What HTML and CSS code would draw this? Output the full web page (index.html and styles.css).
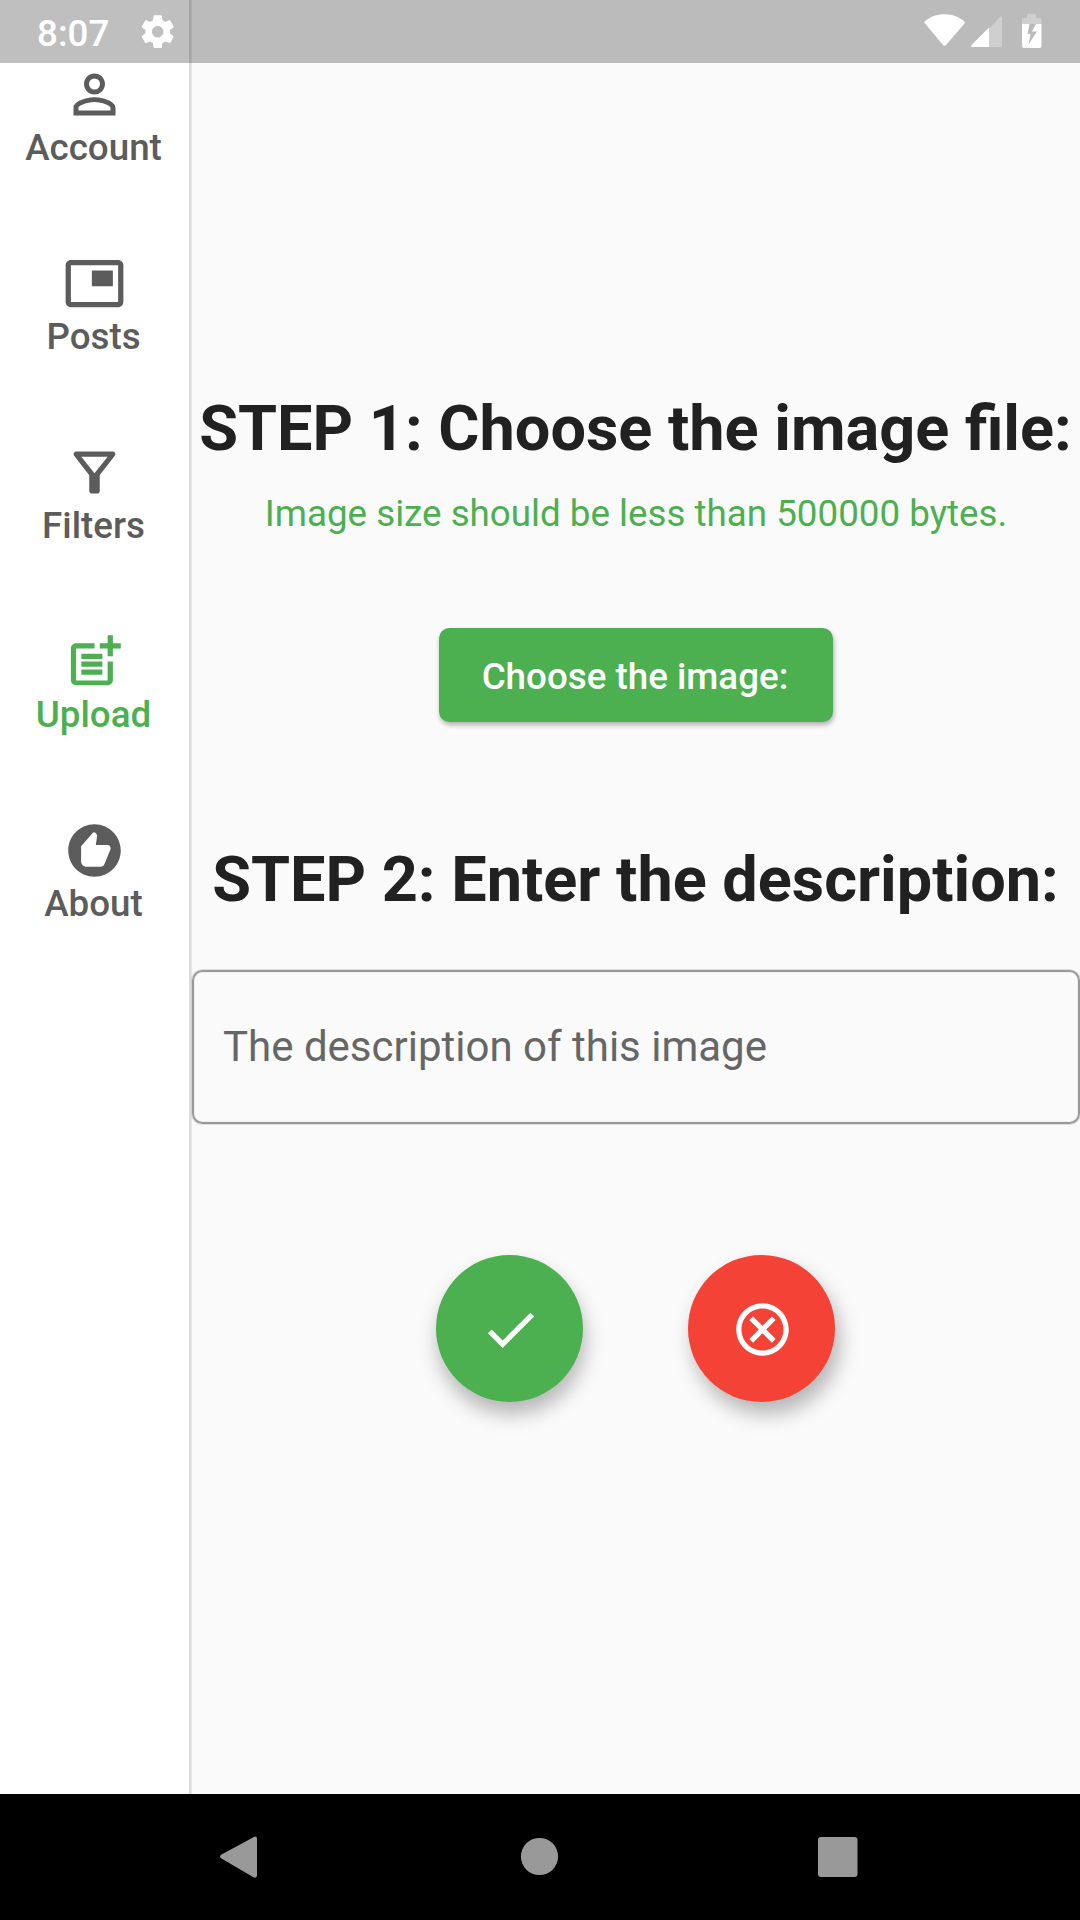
FILE: index.html
```html
<!DOCTYPE html>
<html lang="en">
<head>
<meta charset="utf-8">
<title>Upload</title>
<link rel="stylesheet" href="styles.css">
</head>
<body>
<div class="screen">
  <div class="app">
    <nav class="rail">
      <a class="rail-item">
        <svg class="icon" viewBox="0 0 24 24"><path d="M12 5.9a2.1 2.1 0 1 1 0 4.2 2.1 2.1 0 0 1 0-4.2m0 9c2.97 0 6.1 1.46 6.1 2.1v1.1H5.9V17c0-.64 3.13-2.1 6.1-2.1M12 4C9.79 4 8 5.79 8 8s1.79 4 4 4 4-1.79 4-4-1.79-4-4-4zm0 9c-2.67 0-8 1.34-8 4v3h16v-3c0-2.66-5.33-4-8-4z"/></svg>
        <span>Account</span>
      </a>
      <a class="rail-item">
        <svg class="icon" viewBox="0 0 24 24"><path d="M19 7h-8v6h8V7zm2-4H3c-1.1 0-2 .9-2 2v14c0 1.1.9 2 2 2h18c1.1 0 2-.9 2-2V5c0-1.1-.9-2-2-2zm0 16H3V5h18v14z"/></svg>
        <span>Posts</span>
      </a>
      <a class="rail-item">
        <svg class="icon" viewBox="0 0 24 24"><path d="M7 6h10l-5.01 6.3L7 6zm-2.75-.39C6.27 8.2 10 13 10 13v6c0 .55.45 1 1 1h2c.55 0 1-.45 1-1v-6s3.72-4.8 5.74-7.39A.998.998 0 0 0 18.95 4H5.04c-.83 0-1.3.95-.79 1.61z"/></svg>
        <span>Filters</span>
      </a>
      <a class="rail-item active">
        <svg class="icon" viewBox="0 0 24 24"><path d="M17 19.22H5V7h7V5H5c-1.1 0-2 .9-2 2v12c0 1.1.9 2 2 2h12c1.1 0 2-.9 2-2v-7h-2v7.22zM19 2h-2v3h-3v2h3v3h2V7h3V5h-3V2zM7 9h8v2H7zM7 12h8v2H7zM7 15h8v2H7z"/></svg>
        <span>Upload</span>
      </a>
      <a class="rail-item">
        <svg class="icon" viewBox="0 0 24 24"><path d="M12 2C6.48 2 2 6.48 2 12s4.48 10 10 10 10-4.48 10-10S17.52 2 12 2zm6.1 9.5-2.3 5.6c-.25.66-.75 1.05-1.4 1.05H9c-1.1 0-2.1-.9-2.1-2v-5.8L11.3 5.3c.3-.35.75-.35 1.1 0 .55.5.65.9.55 1.5L12.5 9.9h4.4c.9 0 1.4.7 1.2 1.6z"/></svg>
        <span>About</span>
      </a>
    </nav>
    <div class="divider"></div>
    <main class="content">
      <h1 class="step">STEP 1: Choose the image file:</h1>
      <p class="note">Image size should be less than 500000 bytes.</p>
      <button class="choose">Choose the image:</button>
      <h1 class="step second">STEP 2: Enter the description:</h1>
      <div class="field">The description of this image</div>
      <div class="actions">
        <button class="fab confirm"><svg class="icon" viewBox="0 0 24 24"><path d="M9 16.17L4.83 12l-1.42 1.41L9 19 21 7l-1.41-1.41z"/></svg></button>
        <button class="fab cancel"><svg class="icon" viewBox="0 0 24 24"><path d="M15.59 7 12 10.59 8.41 7 7 8.41 10.59 12 7 15.59 8.41 17 12 13.41 15.59 17 17 15.59 13.41 12 17 8.41zM12 2C6.47 2 2 6.47 2 12s4.47 10 10 10 10-4.47 10-10S17.53 2 12 2zm0 18c-4.41 0-8-3.59-8-8s3.59-8 8-8 8 3.59 8 8-3.59 8-8 8z"/></svg></button>
      </div>
    </main>
  </div>
  <footer class="navbar">
    <svg width="80" height="126"><path d="M52 43.500 20.500 60.500Q17.500 62.500 20.500 64.500L52 83Q56 85 56 81V45Q56 41 52 43.500Z"/></svg>
    <svg width="80" height="126"><circle cx="39.500" cy="62.500" r="18.600"/></svg>
    <svg width="80" height="126"><rect x="19" y="43" width="39.500" height="40" rx="3"/></svg>
  </footer>
  <header class="status">
    <span class="clock">8:07</span>
    <svg class="gear" viewBox="0 0 24 24"><path d="M19.43 12.98c.04-.32.07-.64.07-.98s-.03-.66-.07-.98l2.11-1.65c.19-.15.24-.42.12-.64l-2-3.46c-.12-.22-.39-.3-.61-.22l-2.49 1c-.52-.4-1.08-.73-1.69-.98l-.38-2.65C14.46 2.180 14.250 2 14 2h-4c-.25 0-.46.18-.49.42l-.38 2.65c-.61.25-1.17.59-1.69.98l-2.490-1c-.23-.09-.49 0-.61.22l-2 3.46c-.13.22-.07.49.12.64l2.11 1.65c-.04.32-.07.65-.07.98s.03.66.07.98l-2.110 1.650c-.19.15-.24.42-.12.64l2 3.460c.12.22.39.3.61.22l2.490-1c.52.4 1.080.73 1.690.98l.38 2.650c.03.24.24.42.49.42h4c.25 0 .46-.18.49-.42l.38-2.650c.61-.25 1.170-.59 1.690-.98l2.490 1c.23.09.49 0 .61-.22l2-3.460c.12-.22.07-.49-.12-.64l-2.110-1.650zM12 15.500c-1.930 0-3.500-1.570-3.500-3.500s1.570-3.500 3.500-3.500 3.500 1.570 3.500 3.500-1.570 3.500-3.500 3.500z"/></svg>
    <svg class="signals" width="120" height="63" viewBox="922 0 120 63">
      <path d="M924.500 21.500C935 11.700 954 11.700 964.500 21.500Q965 22.500 964.500 23.500L946 45Q944.500 46.500 943 45L925 23.500Q924 22.500 924.500 21.500Z"/>
      <path class="dim" d="M989 28.500 1000 17Q1002 15 1002 18V45Q1002 47 1000 47H989Z"/>
      <path d="M989 27.500V47H972.500Q970 46.500 972 44.500Z"/>
      <path class="dim" d="M1022 24V19.500Q1022 18 1023.500 18H1027V15.500Q1027 14 1028.500 14H1034.500Q1036 14 1036 15.500V18H1040Q1041.500 18 1041.500 19.500V24Z"/>
      <path fill-rule="evenodd" d="M1022 24H1041.500V46Q1041.500 48 1039.500 48H1024Q1022 48 1022 46ZM1029.500 24 1027.500 34H1030.500L1028.500 44.500 1037 31.500H1032L1036 24Z"/>
    </svg>
  </header>
</div>
</body>
</html>
```
FILE: styles.css
```css
* { box-sizing: border-box; }

body {
  margin: 0;
  font-family: Roboto, "Noto Sans", sans-serif;
}

.screen {
  position: relative;
  display: flex;
  flex-direction: column;
  width: 1080px;
  height: 1920px;
  overflow: hidden;
}

.app {
  display: flex;
  height: 1794px;
  background: #fafafa;
}

.rail {
  display: flex;
  flex-direction: column;
  width: 189px;
  padding-top: 63px;
  background: #fff;
}

.rail-item {
  display: flex;
  flex-direction: column;
  align-items: center;
  height: 189px;
  font-size: 36.75px;
  font-weight: 500;
  line-height: 43px;
  color: #5c5c5c;
}

.rail-item span { margin-right: 2px; }

.rail-item.active { color: #4caf50; }

.icon {
  width: 63px;
  height: 63px;
  fill: currentColor;
}

.divider {
  width: 3px;
  background: linear-gradient(to right, #dcdcdc 2px, #e6e6e6 2px);
}

.content {
  display: flex;
  flex: 1;
  flex-direction: column;
  align-items: center;
  padding-top: 392px;
}

.step {
  margin: 0 1px 0 0;
  font-size: 63px;
  font-weight: 700;
  line-height: 74px;
  white-space: nowrap;
  color: #212121;
}

.note {
  margin: 26px 0 0;
  font-size: 36.75px;
  line-height: 43px;
  color: #4caf50;
}

.choose {
  width: 394px;
  height: 94px;
  margin-top: 93px;
  padding: 2px 2px 0 0;
  border: 0;
  border-radius: 10.5px;
  background: #4caf50;
  box-shadow: 1px 3px 5px rgba(0, 0, 0, .3);
  font: 500 36.75px/43px Roboto, sans-serif;
  color: #fff;
}

.step.second { margin-top: 121px; }

.field {
  display: flex;
  align-items: center;
  align-self: stretch;
  height: 154px;
  margin-top: 53px;
  padding: 0 0 2px 29px;
  border: 2px solid #999;
  border-radius: 10.5px;
  box-shadow: 0 0 0 1px rgba(0, 0, 0, .1), inset 0 0 0 1px rgba(0, 0, 0, .04);
  font-size: 42px;
  line-height: 49px;
  color: #666;
}

.actions {
  display: flex;
  gap: 105px;
  margin: 131px 1px 0 0;
}

.fab {
  display: flex;
  align-items: center;
  justify-content: center;
  width: 147px;
  height: 147px;
  padding: 2px 0 0 1px;
  border: 0;
  border-radius: 50%;
  color: #fff;
}

.confirm {
  background: #4caf50;
  box-shadow: 2px 12px 20px rgba(0, 0, 0, .28);
}

.cancel {
  background: #f44336;
  box-shadow: 5px 12px 20px rgba(0, 0, 0, .28);
}

.navbar {
  display: flex;
  justify-content: center;
  gap: 219px;
  height: 126px;
  background: #000;
  fill: #999;
}

/* Translucent system bar drawn over the app */
.status {
  position: absolute;
  inset: 0 0 auto 0;
  display: flex;
  align-items: center;
  height: 63px;
  padding: 0 38px 0 37px;
  background: rgba(0, 0, 0, .25);
  color: #fff;
  fill: #fff;
}

.clock {
  width: 100.5px;
  padding-top: 4px;
  font-size: 36.75px;
  font-weight: 500;
  line-height: 43px;
}

.gear {
  width: 39.4px;
  height: 39.4px;
}

.signals { margin-left: auto; }

.dim { opacity: .3; }
```
